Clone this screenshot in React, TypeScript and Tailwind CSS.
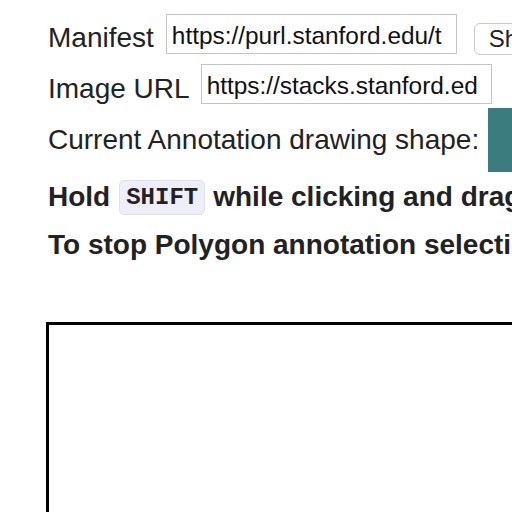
import React from "react"

const inputClass =
  "h-[40px] w-[291px] border border-[#c4c4c4] bg-white pl-[5px] pr-[4px] pt-[4px] text-[24.4px] text-[#111] outline-none font-['Liberation_Sans',Arial,sans-serif]"

export default function App() {
  return (
    <div className="h-[512px] w-[512px] overflow-hidden bg-white font-['Liberation_Sans',Arial,sans-serif] text-[28px] text-[#222]">
      <div className="w-[900px] pl-[48px] pt-[14px]">
        <div className="flex h-[40px] items-start">
          <span className="mt-[8px] leading-[32px]">Manifest</span>
          <input className={`${inputClass} ml-[12px]`} readOnly value="https://purl.stanford.edu/t" />
          <button className="ml-[17px] mt-[9px] h-[32px] rounded-[6px] border border-[#c9c9c9] bg-white px-[14px] text-[24px] leading-none text-[#222]">
            Show
          </button>
        </div>

        <div className="mt-[10px] flex h-[40px] items-start">
          <span className="mt-[9px] leading-[32px]">Image URL</span>
          <input className={`${inputClass} ml-[11px]`} readOnly value="https://stacks.stanford.ed" />
        </div>

        <div className="mt-[4px] flex items-center">
          <span>Current Annotation drawing shape:</span>
          <div className="ml-[9px] h-[64px] w-[64px] bg-[#3b7c7e]" />
        </div>

        <div className="mt-[9px] flex h-[32px] items-center whitespace-nowrap font-bold">
          <span>Hold</span>
          <kbd className="ml-[9px] mr-[8px] rounded-[5px] border border-[#dedff0] bg-[#eeeef9] px-[6px] font-['Liberation_Mono','Courier_New',monospace] text-[24px] font-bold leading-[33px]">
            SHIFT
          </kbd>
          <span>while clicking and dragging the mouse to select an area.</span>
        </div>
        <p className="mt-[16px] whitespace-nowrap font-bold leading-[32px]">
          To stop Polygon annotation selection, press ESC.
        </p>

        <div className="-ml-[2px] mt-[61px] h-[400px] w-[700px] border-[3px] border-black" />
      </div>
    </div>
  )
}
